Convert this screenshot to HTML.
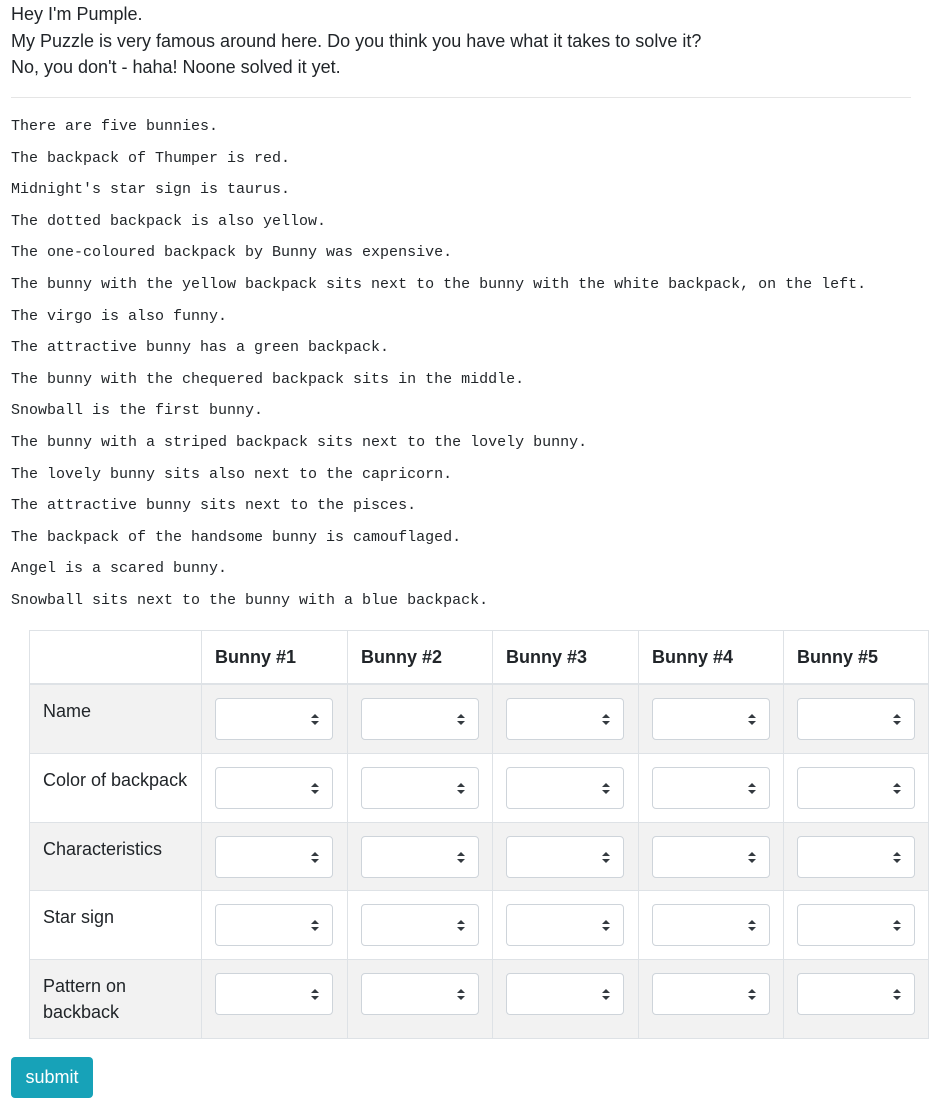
<!DOCTYPE html>
<html><head><meta charset="utf-8"><style>
body{margin:0;background:#fff;color:#212529;font-family:"Liberation Sans",sans-serif;width:946px;height:1110px;position:relative;overflow:hidden}
.intro{position:absolute;left:11px;top:1px;font-size:18px;line-height:26.5px}
hr{position:absolute;left:11px;top:97px;width:900px;margin:0;border:0;border-top:1px solid #e5e5e5}
.mono{position:absolute;left:11px;top:111px;font-family:"Liberation Mono",monospace;font-size:15px;line-height:31.6px;white-space:pre;color:#212529}
table{position:absolute;left:29px;top:630px;border-collapse:collapse;font-size:18px;table-layout:fixed;width:899px}
td,th{border:1px solid #dee2e6;padding:0 13px;vertical-align:top;text-align:left;overflow:hidden}
th{height:52px;vertical-align:middle;font-weight:bold;border-bottom:2px solid #dee2e6}
tr.g td{background:#f2f2f2}
td.l{padding-top:13px;line-height:26px;white-space:nowrap}
.s{margin-top:13px;width:116px;height:40px;border:1px solid #ced4da;border-radius:4px;background:#fff;position:relative}
.s:before{content:"";position:absolute;right:13px;top:15px;border:4px solid transparent;border-bottom:4px solid #343a40;border-top:0}
.s:after{content:"";position:absolute;right:13px;top:22px;border:4px solid transparent;border-top:4px solid #343a40;border-bottom:0}
.btn{position:absolute;left:11px;top:1057px;width:82px;height:41px;background:#17a2b8;color:#fff;border-radius:4px;font-size:18px;line-height:41px;text-align:center}
</style></head><body>
<div class="intro">Hey I'm Pumple.<br>My Puzzle is very famous around here. Do you think you have what it takes to solve it?<br>No, you don't - haha! Noone solved it yet.</div>
<hr>
<div class="mono">There are five bunnies.
The backpack of Thumper is red.
Midnight's star sign is taurus.
The dotted backpack is also yellow.
The one-coloured backpack by Bunny was expensive.
The bunny with the yellow backpack sits next to the bunny with the white backpack, on the left.
The virgo is also funny.
The attractive bunny has a green backpack.
The bunny with the chequered backpack sits in the middle.
Snowball is the first bunny.
The bunny with a striped backpack sits next to the lovely bunny.
The lovely bunny sits also next to the capricorn.
The attractive bunny sits next to the pisces.
The backpack of the handsome bunny is camouflaged.
Angel is a scared bunny.
Snowball sits next to the bunny with a blue backpack.</div>
<table>
<colgroup><col style="width:172px"><col style="width:146px"><col style="width:145px"><col style="width:146px"><col style="width:145px"><col style="width:145px"></colgroup>
<tr><th></th><th>Bunny #1</th><th>Bunny #2</th><th>Bunny #3</th><th>Bunny #4</th><th>Bunny #5</th></tr>
<tr class="g" style="height:69px"><td class="l">Name</td><td><div class="s"></div></td><td><div class="s"></div></td><td><div class="s"></div></td><td><div class="s"></div></td><td><div class="s"></div></td></tr>
<tr style="height:69px"><td class="l">Color of backpack</td><td><div class="s"></div></td><td><div class="s"></div></td><td><div class="s"></div></td><td><div class="s"></div></td><td><div class="s"></div></td></tr>
<tr class="g" style="height:68px"><td class="l">Characteristics</td><td><div class="s"></div></td><td><div class="s"></div></td><td><div class="s"></div></td><td><div class="s"></div></td><td><div class="s"></div></td></tr>
<tr style="height:69px"><td class="l">Star sign</td><td><div class="s"></div></td><td><div class="s"></div></td><td><div class="s"></div></td><td><div class="s"></div></td><td><div class="s"></div></td></tr>
<tr class="g" style="height:79px"><td class="l">Pattern on<br>backback</td><td><div class="s"></div></td><td><div class="s"></div></td><td><div class="s"></div></td><td><div class="s"></div></td><td><div class="s"></div></td></tr>
</table>
<div class="btn">submit</div>
</body></html>
